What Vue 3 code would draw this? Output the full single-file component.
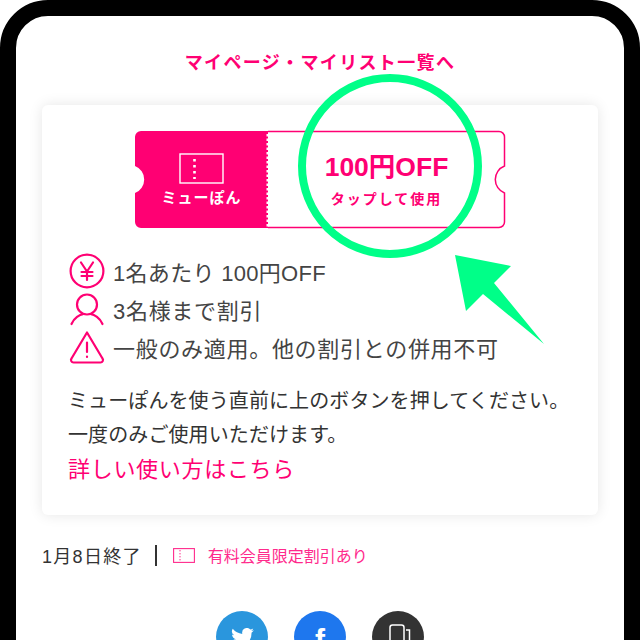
<script setup>
const notes = [
  { icon: 'yen', text: '1名あたり 100円OFF' },
  { icon: 'user', text: '3名様まで割引' },
  { icon: 'warn', text: '一般のみ適用。他の割引との併用不可' },
]
</script>

<template>
  <div class="frame">
    <a class="top-link">マイページ・マイリスト一覧へ</a>

    <section class="card">
      <div class="ticket">
        <svg class="ticket__shape" viewBox="0 0 370 97" aria-hidden="true">
          <path d="M133 .5H364a5.5 5.5 0 0 1 5.500 5.500V35a14.500 14.500 0 0 0 0 27V91a5.500 5.500 0 0 1-5.500 5.500H133" fill="#fff" stroke="#ff0073" stroke-width="1.500" />
          <path d="M6 0H133V97H6a6 6 0 0 1-6-6V62a14.500 14.500 0 0 0 0-27V6a6 6 0 0 1 6-6Z" fill="#ff0073" />
          <line x1="132.500" y1="3" x2="132.500" y2="96" stroke="#fff" stroke-width="2" stroke-dasharray="2.500 2" />
        </svg>
        <div class="ticket__left">
          <svg width="46" height="32" viewBox="0 0 46 32" aria-hidden="true">
            <rect x="1" y="1" width="43" height="29" fill="none" stroke="#fff" stroke-width="1.400" />
            <line x1="15.500" y1="6" x2="15.500" y2="26" stroke="#fff" stroke-width="2.600" stroke-dasharray="2.600 3.400" />
          </svg>
          <span>ミューぽん</span>
        </div>
        <div class="ticket__right">
          <strong>100円OFF</strong>
          <span>タップして使用</span>
        </div>
      </div>

      <ul class="notes">
        <li v-for="n in notes" :key="n.icon">
          <svg width="36" height="36" viewBox="0 0 36 36" fill="none" stroke="#ff0073" stroke-width="2.200" stroke-linecap="round" stroke-linejoin="round" aria-hidden="true">
            <template v-if="n.icon === 'yen'">
              <circle cx="18" cy="18" r="16.400" />
              <path d="M12 9.500 18 18.500 24 9.500M18 18.500V27M12.500 19H23.500M12.500 23H23.500" />
            </template>
            <template v-else-if="n.icon === 'user'">
              <circle cx="18" cy="13.500" r="10" />
              <path d="M2.500 33C5 27 11 23.500 14 23.200M33.500 33C31 27 25 23.500 22 23.200" />
            </template>
            <template v-else>
              <path d="M18 3.500 33.500 29.500A2.500 2.500 0 0 1 31.500 33.500H4.500A2.500 2.500 0 0 1 2.500 29.500Z" />
              <path d="M18 13.500V23M18 27.500V28" />
            </template>
          </svg>
          <span>{{ n.text }}</span>
        </li>
      </ul>

      <p class="desc">ミューぽんを使う直前に上のボタンを押してください。<br />一度のみご使用いただけます。</p>
      <a class="howto">詳しい使い方はこちら</a>
    </section>

    <div class="meta">
      <span class="meta__date">1月8日終了</span>
      <i class="meta__bar"></i>
      <svg width="22" height="15" viewBox="0 0 22 15" aria-hidden="true">
        <rect x=".6" y=".6" width="20.800" height="13.800" fill="none" stroke="#ff2a8c" stroke-width="1.100" />
        <line x1="7" y1="2" x2="7" y2="13" stroke="#ff2a8c" stroke-width="1" stroke-dasharray="1.400 1.600" />
      </svg>
      <span class="meta__tag">有料会員限定割引あり</span>
    </div>

    <div class="share">
      <span class="share__btn share__btn--tw">
        <svg width="23" height="19" viewBox="0 0 24 20" aria-hidden="true"><path fill="#fff" d="M24 2.400a9.800 9.800 0 0 1-2.800.8A4.900 4.900 0 0 0 23.300.5a9.800 9.800 0 0 1-3.100 1.200 4.900 4.900 0 0 0-8.400 4.500A14 14 0 0 1 1.700.9a4.900 4.900 0 0 0 1.500 6.600 4.900 4.900 0 0 1-2.200-.6c0 2.400 1.700 4.400 3.900 4.900a4.900 4.900 0 0 1-2.200.1 4.900 4.900 0 0 0 4.600 3.400A9.900 9.900 0 0 1 0 17.300 14 14 0 0 0 21.500 5a10 10 0 0 0 2.500-2.600Z" /></svg>
      </span>
      <span class="share__btn share__btn--fb">f</span>
      <span class="share__btn share__btn--dark">
        <svg width="22" height="30" viewBox="0 0 22 30" fill="none" stroke="#fff" stroke-width="1.500" aria-hidden="true"><rect x="1" y="1" width="14" height="28" rx="2.500" /><path d="M17 6h3.500v23H17" /></svg>
      </span>
    </div>

    <svg class="callout" width="640" height="640" viewBox="0 0 640 640" aria-hidden="true">
      <circle cx="390" cy="166" r="88" fill="none" stroke="#00ff88" stroke-width="8" />
      <polygon points="455,255 511,266 494,283 544,344 483,294 466,311" fill="#00ff88" />
    </svg>
  </div>
</template>

<style scoped>
.frame {
  position: relative;
  box-sizing: border-box;
  width: 640px;
  height: 720px;
  border: 16px solid #000;
  border-radius: 48px;
  padding-top: 31px;
  background: #fff;
  font-family: "Liberation Sans", "Noto Sans CJK JP", sans-serif;
  color: #333;
}
.top-link {
  display: block;
  text-align: center;
  font-size: 18px;
  line-height: 32px;
  font-weight: 700;
  letter-spacing: 1.350px;
  color: #ff0073;
}
.card {
  box-sizing: border-box;
  width: 556px;
  height: 410px;
  margin: 26px 0 0 26px;
  padding: 26px 26px 0 27px;
  border-radius: 6px;
  background: #fff;
  box-shadow: 0 0 14px rgba(0, 0, 0, 0.1);
}
.ticket {
  position: relative;
  display: flex;
  width: 370px;
  height: 97px;
  margin: 0 auto 0 66px;
}
.ticket__shape {
  position: absolute;
  inset: 0;
  overflow: visible;
}
.ticket__left {
  position: relative;
  display: flex;
  flex-direction: column;
  align-items: center;
  width: 133px;
  padding-top: 22px;
  box-sizing: border-box;
  color: #fff;
  font-size: 15px;
  line-height: 20px;
  font-weight: 700;
  letter-spacing: 1px;
}
.ticket__left svg {
  margin-bottom: 3px;
}
.ticket__right {
  position: relative;
  flex: 1;
  display: flex;
  flex-direction: column;
  align-items: center;
  color: #ff0073;
  padding-top: 19px;
}
.ticket__right strong {
  font-size: 26.500px;
  line-height: 34px;
}
.ticket__right span {
  margin-top: 4px;
  font-size: 14px;
  line-height: 22px;
  font-weight: 700;
  letter-spacing: 2px;
}
.notes {
  list-style: none;
  margin: 24px 0 0;
  padding: 0;
}
.notes li {
  display: flex;
  align-items: center;
  gap: 8px;
  height: 38px;
  font-size: 22px;
  letter-spacing: 0.700px;
  color: #444;
}
.notes li:first-child {
  letter-spacing: 0.300px;
}
.desc {
  margin: 18px 0 0 -1px;
  font-size: 20px;
  letter-spacing: 0.100px;
  line-height: 34px;
  color: #333;
}
.howto {
  display: block;
  margin-left: -1px;
  font-size: 22px;
  line-height: 36px;
  letter-spacing: 0.700px;
  color: #ff0073;
}
.meta {
  display: flex;
  align-items: center;
  margin: 25px 0 0 26px;
  height: 30px;
}
.meta__date {
  font-size: 18px;
  letter-spacing: 1.300px;
  color: #333;
}
.meta__bar {
  width: 2px;
  height: 21px;
  margin: 0 16px 0 13px;
  background: #333;
}
.meta__tag {
  margin-left: 13px;
  font-size: 16px;
  color: #ff2a8c;
}
.share {
  display: flex;
  justify-content: center;
  gap: 26px;
  margin-top: 41px;
}
.share__btn {
  display: flex;
  align-items: flex-start;
  justify-content: center;
  width: 52px;
  height: 52px;
  padding-top: 17px;
  box-sizing: border-box;
  border-radius: 50%;
  color: #fff;
}
.share__btn--tw {
  background: #2a96dd;
}
.share__btn--fb {
  background: #1e77ee;
  padding-top: 14px;
  font: 700 30px/30px "Liberation Sans", sans-serif;
}
.share__btn--dark {
  background: #333;
  padding-top: 13px;
  padding-left: 3px;
}
.callout {
  position: absolute;
  left: -16px;
  top: -16px;
}
</style>

<style>
html, body {
  background: #fff;
  overflow: hidden;
}
</style>
